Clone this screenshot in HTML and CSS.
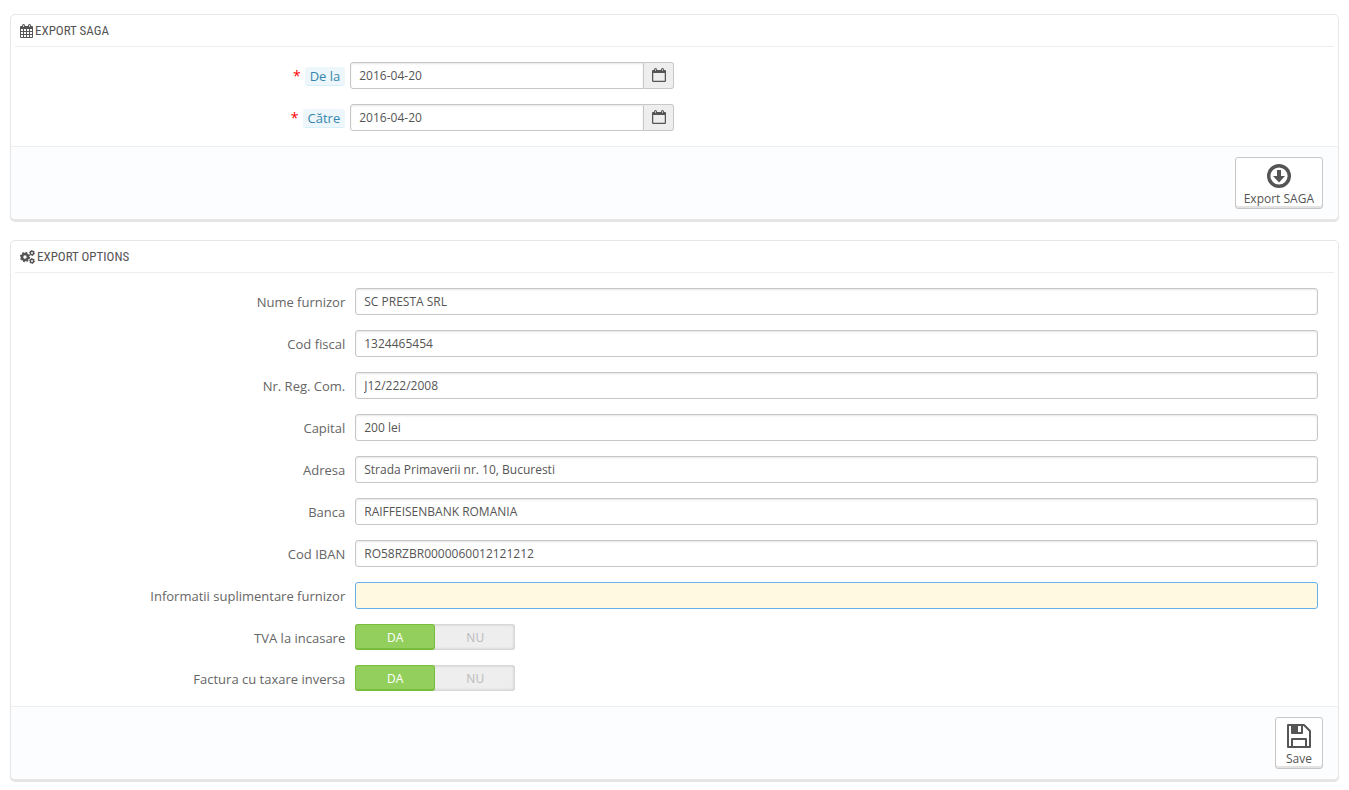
FILE: index.html
```html
<!DOCTYPE html>
<html lang="ro">
<head>
    <meta charset="UTF-8">
    <meta name="viewport" content="width=device-width, initial-scale=1.0">
    <title>Export SAGA</title>
    <link rel="stylesheet" href="styles.css">
</head>
<body>
    <form class="panel">
        <h3 class="panel-heading">
            <svg class="icon" width="13" height="14" viewBox="0 0 13 14">
                <path fill="#555" fill-rule="evenodd" d="M1 2h11q1 0 1 1v10q0 1-1 1H1q-1 0-1-1V3q0-1 1-1zM1 5v2h2V5zM4 5v2h2V5zM7 5v2h2V5zM10 5v2h2V5zM1 8v2h2V8zM4 8v2h2V8zM7 8v2h2V8zM10 8v2h2V8zM1 11v2h2v-2zM4 11v2h2v-2zM7 11v2h2v-2zM10 11v2h2v-2z"/>
                <rect x="2" y="0" width="3" height="4" rx="1.500" fill="#555"/>
                <rect x="8" y="0" width="3" height="4" rx="1.500" fill="#555"/>
                <path fill="none" stroke="#ccc" d="M3.500 1v2M9.500 1v2"/>
            </svg>
            Export SAGA
        </h3>
        <div class="form-rows">
            <div class="form-row">
                <label class="required" for="date-from"><span class="label-tooltip">De la</span></label>
                <div class="input-group">
                    <input type="text" id="date-from" value="2016-04-20">
                    <span class="input-addon">
                        <svg width="14" height="14" viewBox="0 0 14 14">
                            <path fill="none" stroke="#555" stroke-width="1.300" d="M.6 3v9.400q0 1 1 1h10.800q1 0 1-1V3"/>
                            <path fill="#555" d="M0 5V3q0-1 1-1h12q1 0 1 1v2z"/>
                            <rect x="2" y="0" width="3" height="4" rx="1.500" fill="#555"/>
                            <rect x="9" y="0" width="3" height="4" rx="1.500" fill="#555"/>
                            <path fill="none" stroke="#bbb" d="M3.500 1v2M10.500 1v2"/>
                        </svg>
                    </span>
                </div>
            </div>
            <div class="form-row">
                <label class="required" for="date-to"><span class="label-tooltip">Către</span></label>
                <div class="input-group">
                    <input type="text" id="date-to" value="2016-04-20">
                    <span class="input-addon">
                        <svg width="14" height="14" viewBox="0 0 14 14">
                            <path fill="none" stroke="#555" stroke-width="1.300" d="M.6 3v9.400q0 1 1 1h10.800q1 0 1-1V3"/>
                            <path fill="#555" d="M0 5V3q0-1 1-1h12q1 0 1 1v2z"/>
                            <rect x="2" y="0" width="3" height="4" rx="1.500" fill="#555"/>
                            <rect x="9" y="0" width="3" height="4" rx="1.500" fill="#555"/>
                            <path fill="none" stroke="#bbb" d="M3.500 1v2M10.500 1v2"/>
                        </svg>
                    </span>
                </div>
            </div>
        </div>
        <div class="panel-footer">
            <button type="submit" class="btn">
                <svg width="24" height="24" viewBox="0 0 24 24">
                    <circle cx="12" cy="12" r="10.300" fill="none" stroke="#555" stroke-width="3.400"/>
                    <path fill="#555" d="M10 6h4v6h4l-6 6.500L6 12h4z"/>
                </svg>
                Export SAGA
            </button>
        </div>
    </form>

    <form class="panel">
        <h3 class="panel-heading">
            <svg class="icon" width="15" height="14" viewBox="0 0 15 14">
                <g fill="none" stroke="#555">
                    <circle cx="5" cy="7" r="3" stroke-width="2.600"/>
                    <circle cx="5" cy="7" r="4.500" stroke-width="1.400" stroke-dasharray="1.770 1.764"/>
                    <circle cx="12" cy="3" r="1.700" stroke-width="1.500"/>
                    <circle cx="12" cy="3" r="2.500" stroke-width="1" stroke-dasharray="1.300 1.318"/>
                    <circle cx="12" cy="11" r="1.700" stroke-width="1.500"/>
                    <circle cx="12" cy="11" r="2.500" stroke-width="1" stroke-dasharray="1.300 1.318"/>
                </g>
            </svg>
            Export options
        </h3>
        <div class="form-rows">
            <div class="form-row">
                <label for="nume">Nume furnizor</label>
                <div class="field"><input type="text" id="nume" value="SC PRESTA SRL"></div>
            </div>
            <div class="form-row">
                <label for="cod-fiscal">Cod fiscal</label>
                <div class="field"><input type="text" id="cod-fiscal" value="1324465454"></div>
            </div>
            <div class="form-row">
                <label for="reg-com">Nr. Reg. Com.</label>
                <div class="field"><input type="text" id="reg-com" value="J12/222/2008"></div>
            </div>
            <div class="form-row">
                <label for="capital">Capital</label>
                <div class="field"><input type="text" id="capital" value="200 lei"></div>
            </div>
            <div class="form-row">
                <label for="adresa">Adresa</label>
                <div class="field"><input type="text" id="adresa" value="Strada Primaverii nr. 10, Bucuresti"></div>
            </div>
            <div class="form-row">
                <label for="banca">Banca</label>
                <div class="field"><input type="text" id="banca" value="RAIFFEISENBANK ROMANIA"></div>
            </div>
            <div class="form-row">
                <label for="iban">Cod IBAN</label>
                <div class="field"><input type="text" id="iban" value="RO58RZBR0000060012121212"></div>
            </div>
            <div class="form-row">
                <label for="info">Informatii suplimentare furnizor</label>
                <div class="field"><input type="text" id="info" class="active" value=""></div>
            </div>
            <div class="form-row" role="radiogroup" aria-labelledby="tva-label">
                <span class="row-label" id="tva-label">TVA la incasare</span>
                <div class="field">
                    <div class="switch">
                        <input type="radio" name="tva" id="tva-on" value="1" checked>
                        <label for="tva-on">DA</label>
                        <input type="radio" name="tva" id="tva-off" value="0">
                        <label for="tva-off">NU</label>
                    </div>
                </div>
            </div>
            <div class="form-row" role="radiogroup" aria-labelledby="taxare-label">
                <span class="row-label" id="taxare-label">Factura cu taxare inversa</span>
                <div class="field">
                    <div class="switch">
                        <input type="radio" name="taxare" id="taxare-on" value="1" checked>
                        <label for="taxare-on">DA</label>
                        <input type="radio" name="taxare" id="taxare-off" value="0">
                        <label for="taxare-off">NU</label>
                    </div>
                </div>
            </div>
        </div>
        <div class="panel-footer">
            <button type="submit" class="btn">
                <svg width="24" height="24" viewBox="0 0 24 24">
                    <path fill="none" stroke="#555" stroke-width="2" stroke-linejoin="round" d="M1 1h16l6 6v16H1zM5 23v-8h14v8M15 1v8H5V1"/>
                    <path fill="#555" d="M5 1h6v8H5zM14 1h2v8h-2z"/>
                </svg>
                Save
            </button>
        </div>
    </form>
</body>
</html>
```

FILE: styles.css
```css
* {
    box-sizing: border-box;
}
body {
    margin: 0;
    padding: 14px 10px 0;
    font-family: "Open Sans", sans-serif;
    font-size: 13px;
    line-height: 18px;
    color: #666;
    background-color: #fff;
}
.panel {
    margin-bottom: 20px;
    background-color: #fff;
    border: 1px solid #e6e6e6;
    border-radius: 5px;
    box-shadow: 0 2px 0 #e5e5e5;
}
.panel-heading {
    display: flex;
    align-items: center;
    gap: 2px;
    height: 32px;
    margin: 0 4px;
    padding: 0 5px;
    border-bottom: 1px solid #eee;
    font-family: "Ubuntu Condensed", "Roboto Condensed", Roboto, sans-serif;
    font-size: 13px;
    font-weight: normal;
    text-transform: uppercase;
    color: #555;
}
.form-rows {
    display: flex;
    flex-direction: column;
    gap: 15px;
    padding: 15px;
}
.form-row {
    display: grid;
    grid-template-columns: 25% 75%;
}
.form-row > label,
.row-label {
    padding: 5px 5px 0 0;
    height: 23px;
    text-align: right;
}
.field {
    padding: 0 5px;
}
input[type="text"] {
    display: block;
    width: 100%;
    height: 27px;
    padding: 0 8px;
    border: 1px solid #c7c7c7;
    border-radius: 3px;
    background-color: #fff;
    box-shadow: inset 0 1px 2px rgba(0, 0, 0, 0.1);
    font-family: "Open Sans", sans-serif;
    font-size: 12px;
    color: #555;
}
input[type="text"].active {
    border-color: #66afe9;
    background-color: #fff9e1;
    box-shadow: none;
}
.required::before {
    content: "*";
    margin-right: 4px;
    font-size: 14px;
    color: #f00;
}
.label-tooltip {
    display: inline-block;
    padding: 0 5px;
    background-color: #edf7fb;
    border-bottom: 1px solid #d8f0fa;
    border-radius: 3px;
    color: #3586ae;
}
.input-group {
    display: flex;
    width: 33.333%;
}
.input-group input[type="text"] {
    flex: 1;
    min-width: 0;
    border-radius: 3px 0 0 3px;
}
.input-addon {
    display: flex;
    align-items: center;
    justify-content: center;
    width: 30px;
    height: 27px;
    padding-bottom: 1px;
    border: 1px solid #c7c7c7;
    border-left: none;
    border-radius: 0 3px 3px 0;
    background-color: #eee;
}
.switch {
    display: flex;
    width: 160px;
    height: 26px;
    border-radius: 3px;
    background-color: #eee;
    box-shadow: inset 0 0 3px 1px rgba(0, 0, 0, 0.15);
}
.switch input {
    position: absolute;
    opacity: 0;
}
.switch label {
    flex: 1;
    border: 1px solid transparent;
    border-radius: 3px;
    font-size: 12px;
    line-height: 25px;
    text-align: center;
    color: #bbb;
    cursor: pointer;
}
.switch input:checked + label {
    background-color: #92cf5c;
    border-color: #79bd3c;
    border-bottom-width: 2px;
    color: #fff;
}
.panel-footer {
    display: flex;
    justify-content: flex-end;
    padding: 10px 15px;
    border-top: 1px solid #eee;
    border-radius: 0 0 4px 4px;
    background-color: #fcfdfe;
}
.btn {
    display: flex;
    flex-direction: column;
    align-items: center;
    gap: 2px;
    min-width: 48px;
    height: 52px;
    padding: 6px 8px 0;
    border: 1px solid #c7c7c7;
    border-radius: 3px;
    background-color: #fff;
    box-shadow: inset 0 -2px 0 #e2e2e2;
    font-family: "Open Sans", sans-serif;
    font-size: 12px;
    line-height: 18px;
    color: #555;
    cursor: pointer;
}
.btn svg {
    flex-shrink: 0;
}
```
